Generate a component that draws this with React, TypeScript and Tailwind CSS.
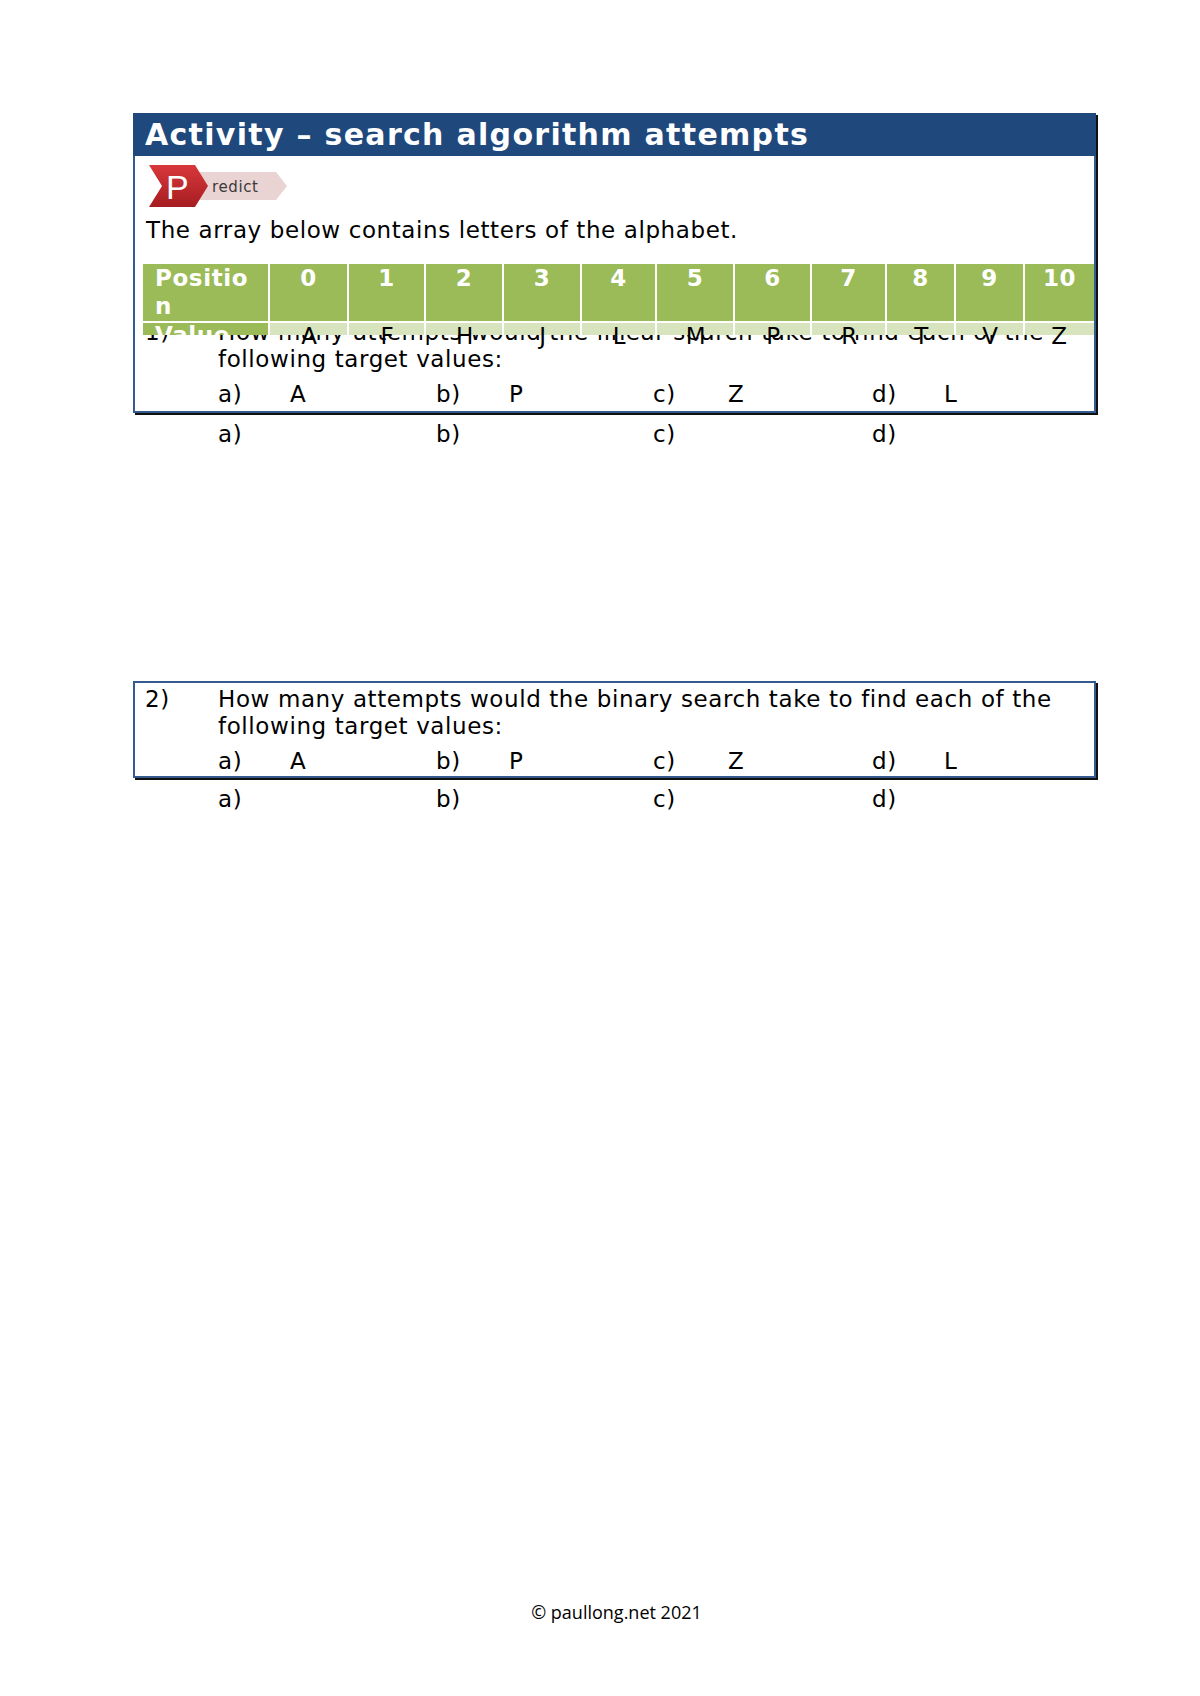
import React from 'react';

type Cell = { pos: string; val: string; width: string };

const cells: Cell[] = [
  { pos: '0', val: 'A', width: 'w-[79px]' },
  { pos: '1', val: 'F', width: 'w-[77px]' },
  { pos: '2', val: 'H', width: 'w-[78px]' },
  { pos: '3', val: 'J', width: 'w-[78px]' },
  { pos: '4', val: 'L', width: 'w-[75px]' },
  { pos: '5', val: 'M', width: 'w-[78px]' },
  { pos: '6', val: 'P', width: 'w-[77px]' },
  { pos: '7', val: 'R', width: 'w-[75px]' },
  { pos: '8', val: 'T', width: 'w-[69px]' },
  { pos: '9', val: 'V', width: 'w-[69px]' },
  { pos: '10', val: 'Z', width: 'w-[69px]' },
];

const targets = ['A', 'P', 'Z', 'L'];

function PredictBadge() {
  return (
    <svg width="140" height="44" viewBox="0 0 140 44" className="block">
      <defs>
        <linearGradient id="redFill" x1="0" y1="0" x2="0" y2="1">
          <stop offset="0" stopColor="#d8383c" />
          <stop offset="1" stopColor="#a61d21" />
        </linearGradient>
      </defs>
      <polygon points="48,8 128,8 139,22 128,36 48,36" fill="#ead3d3" />
      <polygon points="1,1 47,1 60,22 47,43 1,43 14,22" fill="url(#redFill)" />
      <text x="18" y="35" fill="#ffffff" fontSize="34" fontFamily="'Liberation Sans', sans-serif">
        P
      </text>
      <text x="64" y="28" fill="#3a3a3a" fontSize="15" fontFamily="'DejaVu Sans', sans-serif">
        redict
      </text>
    </svg>
  );
}

function AnswerColumns({ withTargets }: { withTargets: boolean }) {
  const letters = ['a)', 'b)', 'c)', 'd)'];
  const labelWidths = ['w-[72px]', 'w-[73px]', 'w-[75px]', 'w-[72px]'];
  const valueWidths = ['w-[146px]', 'w-[144px]', 'w-[144px]', 'w-[60px]'];
  return (
    <div className="flex h-[27px] items-center">
      {letters.map((l, i) => (
        <React.Fragment key={l}>
          <span className={labelWidths[i]}>{l}</span>
          <span className={valueWidths[i]}>{withTargets ? targets[i] : ''}</span>
        </React.Fragment>
      ))}
    </div>
  );
}

function Question({ num, kind, hidden }: { num: string; kind: string; hidden?: boolean }) {
  return (
    <div className={hidden ? 'relative -mt-[16px] pb-[3px] pl-[10px]' : 'pb-[1px] pl-[10px] pt-[3px]'}>
      <div className="flex leading-[27px]">
        <span className="w-[73px] shrink-0">{num}</span>
        <div className="whitespace-nowrap">
          <div>How many attempts would the {kind} search take to find each of the</div>
          <div>following target values:</div>
          <div className="mt-[8px]">
            <AnswerColumns withTargets />
          </div>
        </div>
      </div>
    </div>
  );
}

function OutsideRow() {
  return (
    <div className="mt-[8px] pl-[85px] leading-[27px]">
      <AnswerColumns withTargets={false} />
    </div>
  );
}

function ArrayTable() {
  return (
    <div className="relative z-10 ml-[8px] w-[951px]">
      <div className="h-[71px] overflow-hidden">
        <div className="flex h-[57px] bg-[#9bbb59] font-bold text-white">
          <div className="w-[127px] border-r-2 border-white pl-[12px] leading-[28px]">
            Positio
            <br />n
          </div>
          {cells.map((c, i) => (
            <div
              key={c.pos}
              className={`${c.width} text-center leading-[28px] ${i < cells.length - 1 ? 'border-r-2 border-white' : ''}`}
            >
              {c.pos}
            </div>
          ))}
        </div>
        <div className="flex h-[28px] border-t-2 border-white bg-[#d7e4bd]">
          <div className="w-[127px] border-r-2 border-white bg-[#9bbb59] pl-[12px] font-bold leading-[24px] text-white">
            Value
          </div>
          {cells.map((c, i) => (
            <div
              key={c.val}
              className={`${c.width} ${i < cells.length - 1 ? 'border-r-2 border-white' : ''}`}
            />
          ))}
        </div>
      </div>
      <div className="pointer-events-none absolute left-0 top-[59px] z-20 flex">
        <div className="w-[127px]" />
        {cells.map((c) => (
          <div key={c.val} className={`${c.width} text-center leading-[27px] text-black`}>
            {c.val}
          </div>
        ))}
      </div>
    </div>
  );
}

export default function App() {
  return (
    <div className="relative min-h-[1696px] w-[1200px] bg-white font-['DejaVu_Sans',sans-serif] text-[23px] tracking-[0.6px] text-black">
      <div className="pt-[113px] pl-[133px]">
        <div className="w-[963px] border-2 border-t-0 border-[#345a8e] bg-white shadow-[2px_2px_0_#111]">
          <div className="-mx-[2px] h-[43px] whitespace-nowrap bg-[#1f497d] pl-[12px] text-[30px] font-bold leading-[43px] tracking-[1.3px] text-white">
            Activity – search algorithm attempts
          </div>
          <div className="pl-[13px] pt-[8px]">
            <PredictBadge />
          </div>
          <div className="mt-[9px] pl-[11px] leading-[27px]">The array below contains letters of the alphabet.</div>
          <div className="mt-[20px]">
            <ArrayTable />
          </div>
          <Question num="1)" kind="linear" hidden />
        </div>
        <OutsideRow />

        <div className="mt-[233px] w-[963px] border-2 border-[#345a8e] bg-white shadow-[2px_2px_0_#111]">
          <Question num="2)" kind="binary" />
        </div>
        <OutsideRow />
      </div>
      <div className="absolute left-0 top-[1599px] w-[1233px] text-center font-['Open_Sans',sans-serif] text-[18px] tracking-normal text-black">
        © paullong.net 2021
      </div>
    </div>
  );
}
